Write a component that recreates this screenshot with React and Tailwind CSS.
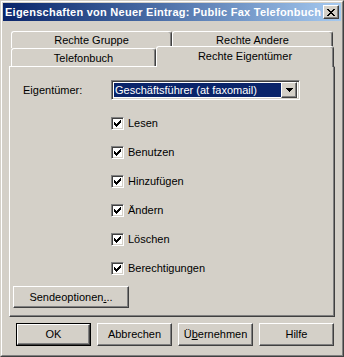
const font = { fontFamily: '"Liberation Sans", Arial, sans-serif' };

const raised =
  "border border-t-white border-l-white border-r-[#404040] border-b-[#404040] shadow-[inset_-1px_-1px_0_#808080]";
const sunken =
  "border border-t-[#808080] border-l-[#808080] border-r-white border-b-white shadow-[inset_1px_1px_0_#404040,inset_-1px_-1px_0_#d4d0c8]";
const tab =
  "flex items-center justify-center rounded-t-[3px] border-t border-l border-r border-t-white border-l-white border-r-[#404040] shadow-[inset_-1px_0_0_#808080] bg-[#d4d0c8]";

function Check() {
  // 7x7 pixel check mark, like the classic one
  const px = [
    [6, 0], [5, 1], [6, 1], [0, 2], [4, 2], [5, 2], [6, 2],
    [0, 3], [1, 3], [3, 3], [4, 3], [5, 3],
    [0, 4], [1, 4], [2, 4], [3, 4], [4, 4],
    [1, 5], [2, 5], [3, 5], [2, 6],
  ];
  return (
    <svg width="7" height="7" viewBox="0 0 7 7" shapeRendering="crispEdges">
      {px.map(([x, y]) => (
        <rect key={`${x}-${y}`} x={x} y={y} width="1" height="1" fill="#000" />
      ))}
    </svg>
  );
}

function Checkbox({ label }) {
  return (
    <div className="flex h-[13px] items-center">
      <div className={`ml-[101px] flex h-[13px] w-[13px] items-center justify-center bg-white ${sunken}`}>
        <Check />
      </div>
      <span className="ml-[4px] text-[11px] leading-none text-black">{label}</span>
    </div>
  );
}

function Button({ children, isDefault }) {
  const inner = (
    <div className={`flex h-full w-full items-center justify-center bg-[#d4d0c8] text-[11px] text-black ${raised}`}>
      {children}
    </div>
  );
  if (isDefault) {
    return <div className="h-[23px] w-[75px] border border-black">{inner}</div>;
  }
  return <div className="h-[23px] w-[75px]">{inner}</div>;
}

export default function App() {
  const rights = ["Lesen", "Benutzen", "Hinzufügen", "Ändern", "Löschen", "Berechtigungen"];

  return (
    <div
      style={font}
      className="h-[357px] w-[344px] border border-t-[#d4d0c8] border-l-[#d4d0c8] border-r-[#404040] border-b-[#404040] bg-[#d4d0c8]"
    >
      <div className="h-full w-full border border-t-white border-l-white border-r-[#808080] border-b-[#808080] p-px">
        {/* Title bar */}
        <div className="flex h-[18px] items-center bg-gradient-to-r from-[#0a246a] to-[#a6caf0] pl-[2px] pr-[2px]">
          <span className="min-w-0 flex-1 whitespace-nowrap text-[11px] font-bold tracking-[0.25px] text-white">
            Eigenschaften von Neuer Eintrag: Public Fax Telefonbuch
          </span>
          <div className={`flex h-[14px] w-[16px] shrink-0 items-center justify-center bg-[#d4d0c8] ${raised}`}>
            <svg width="8" height="7" viewBox="0 0 8 7" shapeRendering="crispEdges">
              <path d="M0 0h2v1h-2z M6 0h2v1h-2z M1 1h2v1h-2z M5 1h2v1h-2z M2 2h4v1h-4z M3 3h2v1h-2z M2 4h4v1h-4z M1 5h2v1h-2z M5 5h2v1h-2z M0 6h2v1h-2z M6 6h2v1h-2z" fill="#000" />
            </svg>
          </div>
        </div>

        {/* Tabs + panel */}
        <div className="mt-[10px] pl-[6px]">
          <div className="flex h-[17px] pl-[2px]">
            <div className={`${tab} h-[17px] w-[161px] pt-px text-[11px] text-black`}>Rechte Gruppe</div>
            <div className={`${tab} h-[17px] w-[161px] pt-px text-[11px] text-black`}>Rechte Andere</div>
          </div>
          <div className="flex h-[18px] pl-[2px]">
            <div className={`${tab} h-[18px] w-[145px] pt-px text-[11px] text-black`}>Telefonbuch</div>
            <div className={`${tab} relative z-10 -mt-[2px] h-[21px] w-[178px] pb-[2px] text-[11px] text-black`}>
              Rechte Eigentümer
            </div>
          </div>

          <div className="h-[251px] w-[326px] border border-t-white border-l-white border-r-[#404040] border-b-[#404040] pt-[13px] shadow-[inset_-1px_-1px_0_#808080]">
            <div className="flex h-[20px] items-center">
              <span className="w-[101px] pl-[13px] text-[11px] text-black">Eigentümer:</span>
              <div className={`flex h-[20px] w-[189px] items-center bg-white p-[2px] ${sunken}`}>
                <div className="flex h-full flex-1 items-center bg-[#0a246a] pl-[1px] text-[11px] text-white">
                  Geschäftsführer (at faxomail)
                </div>
                <div className={`flex h-[16px] w-[16px] items-center justify-center bg-[#d4d0c8] ${raised}`}>
                  <svg width="7" height="4" viewBox="0 0 7 4" shapeRendering="crispEdges">
                    <path d="M0 0h7v1h-7z M1 1h5v1h-5z M2 2h3v1h-3z M3 3h1v1h-1z" fill="#000" />
                  </svg>
                </div>
              </div>
            </div>

            <div className="mt-[17px] flex flex-col gap-[16px]">
              {rights.map((r) => (
                <Checkbox key={r} label={r} />
              ))}
            </div>

            <div className="ml-[3px] mt-[11px] h-[22px] w-[116px]">
              <div className={`flex h-full w-full items-center justify-center bg-[#d4d0c8] text-[11px] text-black ${raised}`}>
                Sendeoptionen<u>.</u>..
              </div>
            </div>
          </div>
        </div>

        {/* Dialog buttons */}
        <div className="mt-[6px] flex gap-[6px] pl-[13px]">
          <Button isDefault>OK</Button>
          <Button>Abbrechen</Button>
          <Button>
            <span>
              Ü<u>b</u>ernehmen
            </span>
          </Button>
          <Button>Hilfe</Button>
        </div>
      </div>
    </div>
  );
}
